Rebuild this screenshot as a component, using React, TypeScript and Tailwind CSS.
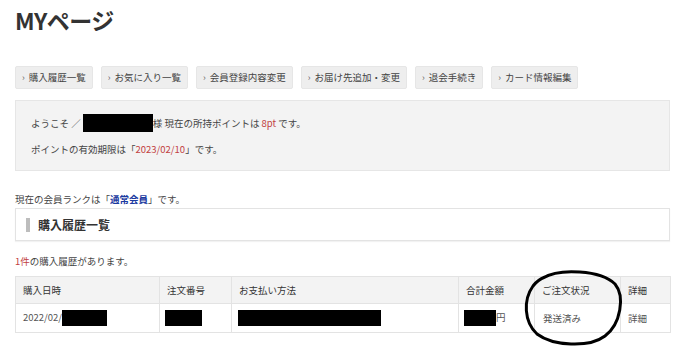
const navItems = ['購入履歴一覧', 'お気に入り一覧', '会員登録内容変更', 'お届け先追加・変更', '退会手続き', 'カード情報編集'];

function Redacted({ w }: { w: string }) {
    return <span className={`inline-block ${w} h-[16px] bg-black align-middle`} />;
}

export default function App() {
    return (
        <div
            className="relative w-[700px] h-[362px] overflow-hidden bg-white text-[#444] pl-[15px] pr-[30px]"
            style={{ fontFamily: '"Noto Sans CJK JP", "Noto Sans", sans-serif' }}
        >
            <h1 className="text-[23px] font-bold text-[#333] leading-[30px] pt-[5px] tracking-tight">MYページ</h1>

            {/* Nav */}
            <div className="flex gap-[8px] mt-[31px]">
                {navItems.map((item) => (
                    <div
                        key={item}
                        className="h-[23px] flex items-center px-[6px] bg-[#eeeeee] border border-[#e6e6e6] rounded-[2px] text-[9.5px] text-[#444] whitespace-nowrap"
                    >
                        <span className="text-[9px] mr-[4px] text-[#666]">›</span>
                        {item}
                    </div>
                ))}
            </div>

            {/* Point info */}
            <div className="mt-[11px] h-[71px] bg-[#f3f3f3] border border-[#e6e6e6] pl-[15px] pt-[12px] text-[9.5px] text-[#444]">
                <div className="leading-[20px] flex items-center whitespace-pre">
                    ようこそ ／ <span className="inline-block w-[70px] h-[18px] bg-black" />様 現在の所持ポイントは <span className="text-[#c2413f]">8pt</span> です。
                </div>
                <div className="leading-[20px] mt-[6px]">
                    ポイントの有効期限は「<span className="text-[#c2413f]">2023/02/10</span>」です。
                </div>
            </div>

            <div className="mt-[18px] text-[9.5px] leading-[20px]">
                現在の会員ランクは「<span className="text-[#1b3aa0] font-bold">通常会員</span>」です。
            </div>

            {/* Heading */}
            <div className="mt-[-1px] h-[33px] border border-[#e3e3e3] shadow-[0_1px_1px_rgba(0,0,0,0.05)] flex items-center pl-[10px]">
                <span className="w-[4px] h-[14px] bg-[#bdbdbd] mr-[8px]" />
                <span className="text-[12px] font-bold text-[#333]">購入履歴一覧</span>
            </div>

            <div className="mt-[10px] text-[9.5px] leading-[20px]">
                <span className="text-[#c2413f]">1件</span>の購入履歴があります。
            </div>

            {/* Table */}
            <table className="mt-[5px] w-[655px] border-collapse text-[9.5px] table-fixed">
                <colgroup>
                    <col className="w-[144px]" />
                    <col className="w-[72px]" />
                    <col className="w-[227px]" />
                    <col className="w-[76px]" />
                    <col className="w-[86px]" />
                    <col className="w-[50px]" />
                </colgroup>
                <thead>
                    <tr className="bg-[#f3f3f3] h-[27px] text-[#333]">
                        {['購入日時', '注文番号', 'お支払い方法', '合計金額', 'ご注文状況', '詳細'].map((h) => (
                            <th key={h} className="border border-[#e3e3e3] text-left font-normal px-[7px]">{h}</th>
                        ))}
                    </tr>
                </thead>
                <tbody>
                    <tr className="h-[29px] text-[#555]">
                        <td className="border border-[#e3e3e3] px-[7px]">2022/02/<Redacted w="w-[45px]" /></td>
                        <td className="border border-[#e3e3e3] px-[5px]"><Redacted w="w-[37px]" /></td>
                        <td className="border border-[#e3e3e3] px-[6px]"><Redacted w="w-[143px]" /></td>
                        <td className="border border-[#e3e3e3] px-[5px]"><Redacted w="w-[32px]" />円</td>
                        <td className="border border-[#e3e3e3] px-[8px]">発送済み</td>
                        <td className="border border-[#e3e3e3] px-[7px]">詳細</td>
                    </tr>
                </tbody>
            </table>

            {/* Hand-drawn circle overlay */}
            <svg className="absolute left-[521px] top-[266px]" width="106" height="82" viewBox="0 0 106 82">
                <path
                    d="M22 12 C38 2 80 4 94 18 C104 30 100 58 84 70 C68 82 32 80 16 68 C3 56 2 34 12 20 C15 16 19 13 24 11"
                    fill="none"
                    stroke="#000"
                    strokeWidth="3"
                    strokeLinecap="round"
                />
            </svg>
        </div>
    );
}
